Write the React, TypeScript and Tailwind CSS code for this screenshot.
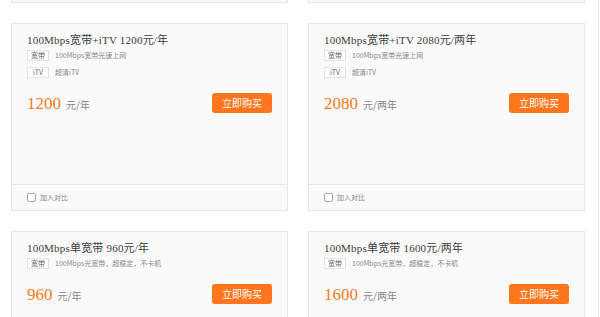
type Tag = { label: string; text: string };

interface Plan {
  title: string;
  tags: Tag[];
  price: string;
  unit: string;
}

const plans: Plan[] = [
  {
    title: "100Mbps宽带+iTV 1200元/年",
    tags: [
      { label: "宽带", text: "100Mbps宽带光速上网" },
      { label: "iTV", text: "超清iTV" },
    ],
    price: "1200",
    unit: "元/年",
  },
  {
    title: "100Mbps宽带+iTV 2080元/两年",
    tags: [
      { label: "宽带", text: "100Mbps宽带光速上网" },
      { label: "iTV", text: "超清iTV" },
    ],
    price: "2080",
    unit: "元/两年",
  },
  {
    title: "100Mbps单宽带 960元/年",
    tags: [{ label: "宽带", text: "100Mbps光宽带，超稳定，不卡机" }],
    price: "960",
    unit: "元/年",
  },
  {
    title: "100Mbps单宽带 1600元/两年",
    tags: [{ label: "宽带", text: "100Mbps光宽带，超稳定，不卡机" }],
    price: "1600",
    unit: "元/两年",
  },
];

function PlanCard({ plan }: { plan: Plan }) {
  return (
    <div className="h-[188px] flex flex-col bg-[#fafafa] border border-[#e6e6e6]">
      <div className="flex-1 px-[15px] pt-[8px]">
        <h3 className="h-[16px] leading-[16px] text-[11px] tracking-[0.2px] text-[#3c3c3c] whitespace-nowrap [font-family:'Liberation_Serif','Noto_Sans_CJK_SC',serif]">
          {plan.title}
        </h3>
        <div className="mt-[2px] flex flex-col gap-[6px]">
          {plan.tags.map((t) => (
            <div key={t.label} className="flex items-center h-[11px]">
              <span className="w-[22px] h-[11px] flex items-center justify-center bg-white border border-[#e2e2e2] text-[7px] leading-none text-[#666]">
                {t.label}
              </span>
              <span className="ml-[6px] text-[7px] leading-none text-[#888]">{t.text}</span>
            </div>
          ))}
        </div>
        <div className="mt-[15px] h-[20px] flex items-center justify-between">
          <div className="flex items-baseline">
            <span className="text-[17px] leading-none text-[#f57a22] [font-family:'Liberation_Serif',serif]">
              {plan.price}
            </span>
            <span className="ml-[5px] text-[10px] leading-none text-[#888]">{plan.unit}</span>
          </div>
          <button className="w-[60px] h-[20px] rounded-[3px] bg-[#ff761c] text-white text-[10px] leading-none">
            立即购买
          </button>
        </div>
      </div>
      <div className="h-[26px] border-t border-[#e6e6e6] flex items-center px-[15px]">
        <span className="w-[9px] h-[9px] border border-[#a8a8a8] rounded-[2px] bg-white" />
        <span className="ml-[4px] text-[7px] leading-none text-[#888]">加入对比</span>
      </div>
    </div>
  );
}

export default function App() {
  return (
    <div className="w-[600px] h-[317px] overflow-hidden bg-white [font-family:'Noto_Sans_CJK_SC','Noto_Sans',sans-serif]">
      <div className="w-[599px] h-full border-r border-[#ededed] pl-[11px]">
        {/* bottom edge of the row above, scrolled out of view */}
        <div className="grid grid-cols-[277px_277px] gap-x-[20px] mb-[20px]">
          <div className="h-[3px] bg-[#fafafa] border border-t-0 border-[#e6e6e6]" />
          <div className="h-[3px] bg-[#fafafa] border border-t-0 border-[#e6e6e6]" />
        </div>
        <div className="grid grid-cols-[277px_277px] gap-x-[20px] gap-y-[20px]">
          {plans.map((p) => (
            <PlanCard key={p.title} plan={p} />
          ))}
        </div>
      </div>
    </div>
  );
}
